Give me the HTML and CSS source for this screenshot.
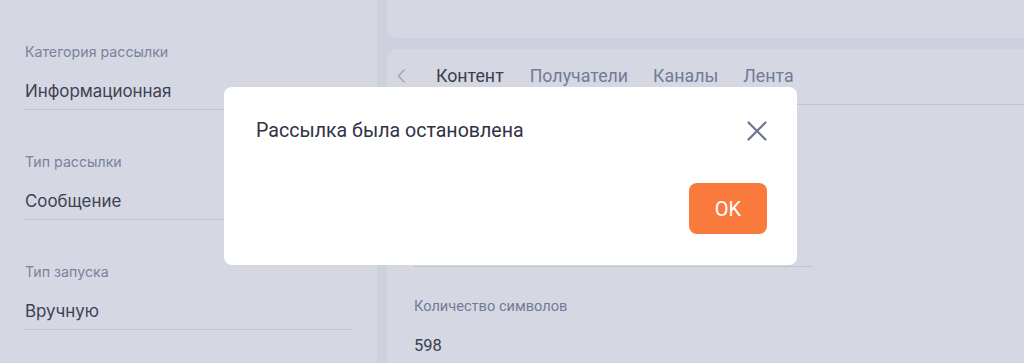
FILE: index.html
```html
<!DOCTYPE html>
<html lang="ru">
<head>
<meta charset="utf-8">
<title>Рассылка</title>
<link rel="stylesheet" href="styles.css">
</head>
<body>
<div class="page">
  <aside class="side">
    <div class="field">
      <div class="label">Категория рассылки</div>
      <div class="value">Информационная</div>
    </div>
    <div class="field">
      <div class="label">Тип рассылки</div>
      <div class="value">Сообщение</div>
    </div>
    <div class="field">
      <div class="label">Тип запуска</div>
      <div class="value">Вручную</div>
    </div>
  </aside>
  <main class="main">
    <div class="card card-top"></div>
    <div class="card card-tabs">
      <nav class="tabs">
        <span class="chev">
          <svg width="10" height="14" viewBox="0 0 10 14"><path d="M8 1 L2.5 7 L8 13" fill="none" stroke="#a6aabb" stroke-width="1.8" stroke-linecap="round" stroke-linejoin="round"/></svg>
        </span>
        <span class="tab active">Контент</span>
        <span class="tab">Получатели</span>
        <span class="tab">Каналы</span>
        <span class="tab">Лента</span>
      </nav>
      <div class="content">
        <div class="rfield rfield-hidden"></div>
        <div class="rfield">
          <div class="rlabel">Количество символов</div>
          <div class="rvalue">598</div>
        </div>
      </div>
    </div>
  </main>
</div>
<div class="modal">
  <div class="modal-head">
    <div class="modal-title">Рассылка была остановлена</div>
    <span class="close">
      <svg width="20" height="20" viewBox="0 0 20 20"><path d="M1.5 1.5 L18.5 18.5 M18.5 1.5 L1.5 18.5" fill="none" stroke="#6b7390" stroke-width="2.2" stroke-linecap="round"/></svg>
    </span>
  </div>
  <div class="modal-foot">
    <button class="ok">OK</button>
  </div>
</div>
</body>
</html>
```
FILE: styles.css
```css
html, body {
  margin: 0;
  padding: 0;
}
body {
  background: #cdd0dd;
  width: 1024px;
  height: 363px;
  overflow: hidden;
  font-family: "Roboto", "Liberation Sans", sans-serif;
}
.page {
  display: flex;
  height: 363px;
}
.side {
  width: 377px;
  flex: none;
  box-sizing: border-box;
  background: #d5d7e3;
  padding: 42px 25px 0 24px;
  font-family: "Inter", "Roboto", sans-serif;
}
.field {
  border-bottom: 1px solid #c0c3d2;
  padding-bottom: 6px;
  margin-bottom: 42px;
}
.label {
  font-size: 14.2px;
  line-height: 20px;
  color: #7b829a;
  padding-left: 1px;
}
.value {
  margin-top: 17px;
  font-size: 16.9px;
  line-height: 24px;
  color: #3d4152;
  padding-left: 1px;
}
.main {
  flex: 1;
  margin-left: 10px;
  display: flex;
  flex-direction: column;
  gap: 11px;
}
.card {
  background: #d5d7e3;
}
.card-top {
  height: 38px;
  border-radius: 0 0 0 10px;
}
.card-tabs {
  flex: 1;
  border-radius: 10px 0 0 0;
}
.tabs {
  display: flex;
  align-items: center;
  height: 56px;
  padding-bottom: 2px;
  box-sizing: border-box;
  border-bottom: 1px solid #c0c3d2;
  margin-left: 27px;
}
.chev {
  display: flex;
  margin-left: -18px;
  margin-right: 30px;
}
.tab {
  font-size: 17.8px;
  line-height: 24px;
  color: #737b96;
  margin-right: 25px;
}
.tab.active {
  color: #3a3e4d;
  margin-right: 26px;
}
.content {
  padding: 0 0 0 27px;
}
.rfield-hidden {
  width: 399px;
  height: 161px;
  border-bottom: 1px solid #c0c3d2;
}
.rfield {
  width: 399px;
}
.rlabel {
  margin-top: 29px;
  font-size: 14.6px;
  line-height: 20px;
  color: #737b96;
}
.rvalue {
  margin-top: 20px;
  font-size: 16.5px;
  line-height: 20px;
  color: #3a3e4d;
}
.modal {
  position: fixed;
  left: 224px;
  top: 87px;
  width: 573px;
  height: 178px;
  box-sizing: border-box;
  background: #ffffff;
  border-radius: 8px;
  padding: 32px 31px 31px 32px;
  display: flex;
  flex-direction: column;
  justify-content: space-between;
}
.modal-head {
  display: flex;
  align-items: center;
  justify-content: space-between;
}
.modal-title {
  font-size: 19.6px;
  line-height: 24px;
  color: #2f3344;
}
.close {
  display: flex;
  margin-right: -1px;
}
.modal-foot {
  display: flex;
  justify-content: flex-end;
}
.ok {
  width: 78px;
  height: 51px;
  border: none;
  border-radius: 8px;
  background: #f97a3c;
  color: #ffffff;
  font-family: "Roboto", sans-serif;
  font-size: 20px;
  padding: 0;
  margin-right: -1px;
}
```
